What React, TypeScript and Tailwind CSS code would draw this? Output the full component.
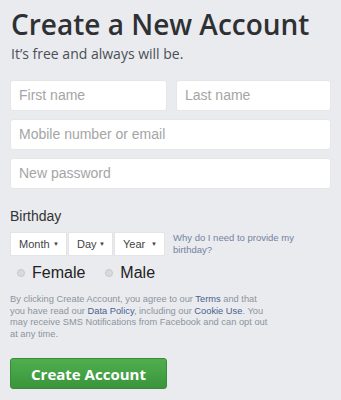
import React from 'react';

export default function App() {
  const selectBox = 'flex items-center justify-between bg-white border border-[#e4e4e4] h-[24px] pl-[8px] pr-[7px] text-[11px] text-[#444]';
  const field = 'h-[31px] bg-white rounded-[3px] border border-[#e6e6e6] px-[8px] text-[14px] text-[#a5a5a5] flex items-center';

  return (
    <div className="w-[341px] h-[400px] bg-[#e9ebee] pl-[10px] pr-[10px] pt-[6px] overflow-hidden" style={{ fontFamily: '"Liberation Sans", Arial, sans-serif' }}>
      <h1 className="text-[28px] font-semibold text-[#2f3033] leading-[36px] pl-[1px]" style={{ fontFamily: '"Open Sans", sans-serif' }}>
        Create a New Account
      </h1>
      <p className="text-[14px] text-[#4b4f56] leading-[20px] pl-[1px] mt-[2px]" style={{ fontFamily: '"Open Sans", sans-serif' }}>
        It’s free and always will be.
      </p>

      <div className="flex gap-[9px] mt-[16px]">
        <div className={`${field} w-[157px] border-[#a6b8e6]`}>First name</div>
        <div className={`${field} w-[155px]`}>Last name</div>
      </div>
      <div className={`${field} mt-[8px]`}>Mobile number or email</div>
      <div className={`${field} mt-[8px]`}>New password</div>

      <div className="text-[14px] text-[#333] mt-[18px] leading-[18px]">Birthday</div>
      <div className="flex items-center mt-[7px]">
        <div className={`${selectBox} w-[57px]`}>
          <span>Month</span>
          <span className="text-[6px]">▼</span>
        </div>
        <div className={`${selectBox} w-[45px] ml-[1px]`}>
          <span>Day</span>
          <span className="text-[6px]">▼</span>
        </div>
        <div className={`${selectBox} w-[51px] ml-[1px]`}>
          <span>Year</span>
          <span className="text-[6px]">▼</span>
        </div>
        <div className="ml-[8px] text-[9.5px] leading-[12px] text-[#7482a3] w-[135px]">
          Why do I need to provide my birthday?
        </div>
      </div>

      <div className="flex items-center mt-[7px] pl-[7px] text-[16px] text-[#222] leading-[20px]">
        <span className="w-[8px] h-[8px] rounded-full bg-[#dadada] border border-[#c8c8c8]" />
        <span className="ml-[7px]">Female</span>
        <span className="w-[8px] h-[8px] rounded-full bg-[#dadada] border border-[#c8c8c8] ml-[20px]" />
        <span className="ml-[7px]">Male</span>
      </div>

      <p className="mt-[11px] text-[9.3px] leading-[11.6px] text-[#8d949e] w-[258px]">
        By clicking Create Account, you agree to our <span className="text-[#4a5f8f]">Terms</span> and that you have read our <span className="text-[#4a5f8f]">Data Policy</span>, including our <span className="text-[#4a5f8f]">Cookie Use</span>. You may receive SMS Notifications from Facebook and can opt out at any time.
      </p>

      <button className="mt-[18px] w-[157px] h-[31px] rounded-[3px] bg-gradient-to-b from-[#4fae4f] to-[#3b953b] border border-[#3a8a3a] text-white text-[15px] font-bold flex items-center justify-center" style={{ fontFamily: '"Open Sans", sans-serif' }}>
        Create Account
      </button>
    </div>
  );
}
